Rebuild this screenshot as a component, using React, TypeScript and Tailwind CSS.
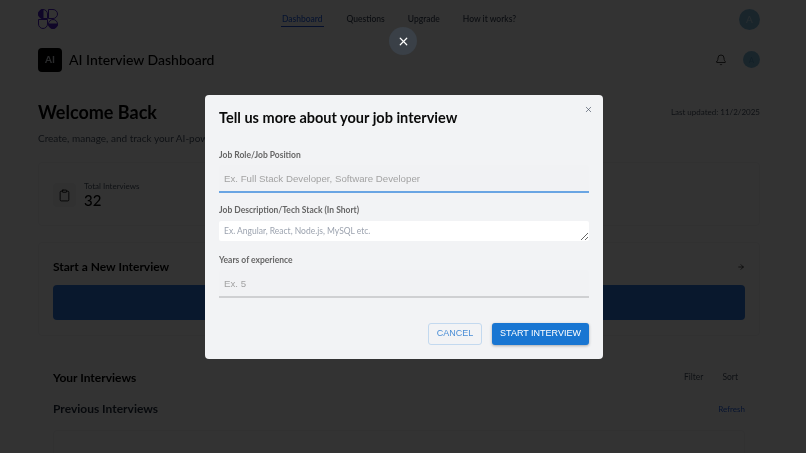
import { X, Bell, Clipboard, ArrowRight } from "lucide-react";

function Logo() {
  return (
    <svg width="20" height="20" viewBox="0 0 20 20" fill="none" stroke="#4f21c9" strokeWidth="1">
      <path d="M5 .5A4.5 4.5 0 0 1 9.5 5V9.5H5A4.5 4.5 0 0 1 5 .5Z" />
      <path d="M5 .5A4.5 4.5 0 0 0 5 9.5Z" fill="#4f21c9" />
      <path d="M10.5 .5H15A4.5 4.5 0 0 1 15 9.5H10.5Z" />
      <path d="M.5 10.5H9.5V15A4.5 4.5 0 0 1 .5 15Z" />
      <circle cx="15" cy="15" r="4.5" />
      <path d="M10.5 15A4.5 4.5 0 0 0 19.5 15Z" fill="#4f21c9" />
    </svg>
  );
}

const nav = ["Questions", "Upgrade", "How it works?"];

export default function App() {
  return (
    <div className="relative h-[453px] w-[806px] overflow-hidden bg-white font-['Lato',sans-serif] text-black blur-[0.35px]">
      <div className="pl-[38px] pr-[46px]">
        <header className="relative flex h-[38px] items-center justify-between">
          <Logo />
          <nav className="flex items-center gap-[23px] text-[8.5px] font-medium text-gray-700">
            <span className="border-b border-[#1d4ed8] px-[1px] pb-[1px] pt-[2px] text-[#2563eb]">Dashboard</span>
            {nav.map((n) => (
              <span key={n}>{n}</span>
            ))}
          </nav>
          <div className="flex h-[21px] w-[21px] items-center justify-center rounded-full bg-[#7fb8d8] text-[10px] text-[#c0e0f0]">
            A
          </div>
        </header>

        <div className="mt-[10px] flex h-[23px] items-center justify-between">
          <div className="flex items-center gap-[7px]">
            <div className="flex h-[24px] w-[24px] items-center justify-center rounded-[4px] bg-black text-[10px] font-bold text-gray-300">
              AI
            </div>
            <span className="text-[14px] font-medium">AI Interview Dashboard</span>
          </div>
          <div className="flex items-center gap-[16px]">
            <Bell size={12} strokeWidth={1.5} />
            <div className="flex h-[17px] w-[17px] items-center justify-center rounded-full bg-[#7fb8d8] text-[8px] text-[#5a9cc0]">
              A
            </div>
          </div>
        </div>

        <div className="mt-[28px] flex items-center justify-between">
          <h1 className="text-[18px] font-bold leading-[26px]">Welcome Back</h1>
          <span className="text-[8px] text-gray-600">Last updated: 11/2/2025</span>
        </div>
        <p className="mt-[6px] text-[10px] leading-[14px] text-gray-600">
          Create, manage, and track your AI-powered mock interviews
        </p>

        <section className="mt-[17px] h-[64px] rounded-[4px] border border-gray-100 px-[14px] pt-[18px]">
          <div className="flex items-center gap-[8px]">
            <div className="flex h-[24px] w-[23px] items-center justify-center rounded-[4px] bg-gray-100">
              <Clipboard size={13} strokeWidth={1.6} />
            </div>
            <div>
              <div className="text-[8px] leading-[10px] text-gray-600">Total Interviews</div>
              <div className="text-[15px] font-medium leading-[18px]">32</div>
            </div>
          </div>
        </section>

        <section className="mt-[16px] h-[94px] rounded-[4px] border border-gray-100 px-[14px] pt-[15px]">
          <div className="flex items-center justify-between">
            <h2 className="text-[12px] font-bold leading-[17px]">Start a New Interview</h2>
            <ArrowRight size={8} />
          </div>
          <div className="mt-[10px] h-[35px] rounded-[4px] bg-[#2f78e0]" />
        </section>

        <div className="mt-[33px] flex items-center justify-between px-[15px]">
          <h2 className="text-[12px] font-bold leading-[17px]">Your Interviews</h2>
          <div className="mr-[7px] flex gap-[19px] text-[8.5px] text-gray-600">
            <span>Filter</span>
            <span>Sort</span>
          </div>
        </div>
        <div className="mt-[14px] flex items-center justify-between px-[15px]">
          <h2 className="text-[12px] font-bold leading-[17px] text-gray-800">Previous Interviews</h2>
          <span className="text-[8px] text-[#2563eb]">Refresh</span>
        </div>
        <div className="mx-[15px] mt-[13px] h-[40px] rounded-[4px] border border-gray-100" />
      </div>

      <div className="absolute inset-0 bg-black/80" />

      <button className="absolute left-[389px] top-[27px] flex h-[28px] w-[28px] items-center justify-center rounded-full bg-[#3a4047] text-white">
        <X size={13} strokeWidth={2.2} />
      </button>

      <div className="absolute left-[205px] top-[95px] flex h-[264px] w-[398px] flex-col rounded-[4px] bg-[#f2f3f5] px-[14px] pt-[13px]">
        <button className="absolute right-[10px] top-[10px] text-gray-600">
          <X size={9} strokeWidth={1.8} />
        </button>
        <h2 className="text-[14.5px] font-bold leading-[20px] text-[#0a0a0a]">Tell us more about your job interview</h2>

        <label className="mt-[21px] text-[8.5px] font-bold leading-[12px] text-[#666]">Job Role/Job Position</label>
        <input
          placeholder="Ex. Full Stack Developer, Software Developer"
          className="mt-[4px] h-[28px] w-full rounded-t-[3px] border-b-2 border-b-[#6aa5e3] bg-[#f1f2f4] px-[5px] font-['Liberation_Sans',sans-serif] text-[9.7px] outline-none placeholder:text-[#a3a3a3]"
        />

        <label className="mt-[11px] text-[8.5px] font-bold leading-[12px] text-[#666]">
          Job Description/Tech Stack (In Short)
        </label>
        <textarea
          placeholder="Ex. Angular, React, Node.js, MySQL etc."
          className="mt-[5px] h-[20px] w-full resize-y rounded-[2px] bg-white px-[5px] pt-[5px] pb-0 text-[8.5px] leading-[11px] outline-none placeholder:text-[#9ca3af]"
        />

        <label className="mt-[13px] text-[8.5px] font-bold leading-[12px] text-[#666]">Years of experience</label>
        <input
          placeholder="Ex. 5"
          className="mt-[4px] h-[28px] w-full rounded-t-[3px] border-b-2 border-b-[#cfd0d2] bg-[#f1f2f4] px-[5px] font-['Liberation_Sans',sans-serif] text-[9.7px] outline-none placeholder:text-[#a3a3a3]"
        />

        <div className="mt-[25px] flex justify-end gap-[10px] font-['Liberation_Sans',sans-serif] text-[9px] font-medium">
          <button className="h-[22px] w-[54px] rounded-[3px] border border-[#c3d9ef] text-[#4a8ed6]">CANCEL</button>
          <button className="h-[22px] w-[97px] rounded-[3px] bg-[#1976d2] text-white shadow-[0_1px_3px_rgba(0,0,0,0.3)]">
            START INTERVIEW
          </button>
        </div>
      </div>
    </div>
  );
}
